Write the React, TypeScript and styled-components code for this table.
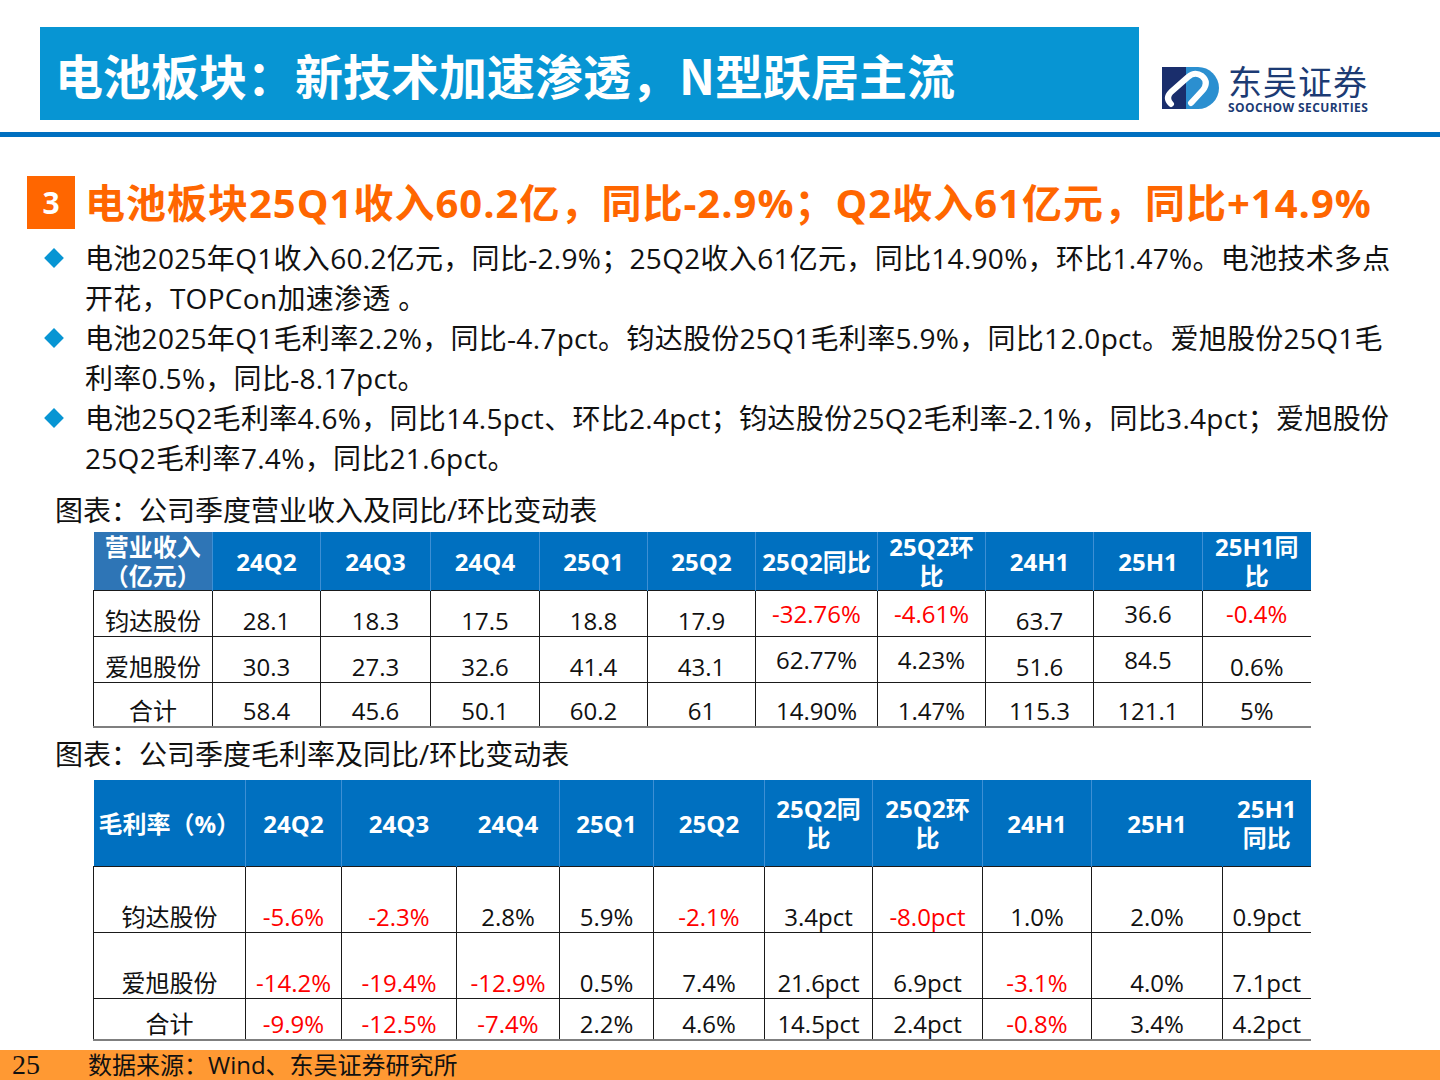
import React from "react";
import styled, { createGlobalStyle } from "styled-components";

const GlobalStyle = createGlobalStyle`
  body {
    margin: 0;
    background: #ffffff;
    font-family: "Open Sans", "Noto Sans CJK SC", sans-serif;
  }
`;

const Page = styled.div`
  width: 1440px;
  height: 1080px;
  overflow: hidden;
  display: flex;
  flex-direction: column;
  background: #ffffff;
  color: #111111;
`;

const TopBar = styled.div`
  display: flex;
  align-items: flex-start;
  height: 120px;
  box-sizing: border-box;
  padding-top: 27px;
`;

const TitleBox = styled.div`
  margin-left: 40px;
  width: 1099px;
  height: 93px;
  box-sizing: border-box;
  padding-left: 15px;
  display: flex;
  align-items: center;
  background: #0795d3;
  color: #ffffff;
  font-family: "Noto Sans CJK SC", sans-serif;
  font-weight: 700;
  font-size: 48px;
  white-space: nowrap;
`;

const Logo = styled.div`
  margin-left: 23px;
  margin-top: 40px;
  display: flex;
  align-items: flex-start;
  gap: 9px;
`;

const LogoText = styled.div`
  display: flex;
  flex-direction: column;
  color: #1c3b74;
`;

const LogoCn = styled.div`
  font-family: "Noto Sans CJK SC", sans-serif;
  font-size: 34px;
  line-height: 34px;
  letter-spacing: 1px;
  margin-top: -3px;
`;

const LogoEn = styled.div`
  font-family: "Open Sans", sans-serif;
  font-weight: 700;
  font-size: 12px;
  line-height: 13px;
  letter-spacing: 0.4px;
  margin-top: 3px;
`;

const Rule = styled.div`
  margin-top: 12px;
  height: 5px;
  background: #0070c0;
`;

const Section = styled.div`
  margin-top: 39px;
  display: flex;
  align-items: center;
`;

const NumBox = styled.div`
  margin-left: 27px;
  width: 48px;
  height: 53px;
  display: flex;
  align-items: center;
  justify-content: center;
  background: #ff6600;
  color: #ffffff;
  font-weight: 700;
  font-size: 30px;
`;

const SectionTitle = styled.div`
  margin-left: 10px;
  color: #ff6600;
  font-weight: 700;
  font-size: 40px;
  letter-spacing: 1px;
  line-height: 53px;
  white-space: nowrap;
`;

const Bullets = styled.div`
  margin-top: 9px;
  display: flex;
  flex-direction: column;
`;

const Bullet = styled.div`
  display: flex;
  align-items: flex-start;
`;

const Diamond = styled.div`
  width: 14px;
  height: 14px;
  margin: 13px 0 0 47px;
  background: #0795d3;
  transform: rotate(45deg);
`;

const BulletText = styled.div`
  margin-left: 24px;
  font-size: 28px;
  letter-spacing: 0.3px;
  line-height: 40px;
  color: #111111;
  white-space: nowrap;
`;

const Caption = styled.div<{ $top: number }>`
  margin-top: ${(p) => p.$top}px;
  padding-left: 55px;
  font-size: 28px;
  line-height: 40px;
  white-space: nowrap;
`;

const Table = styled.table<{ $top: number }>`
  margin-top: ${(p) => p.$top}px;
  margin-left: 93px;
  width: 1217px;
  border-collapse: collapse;
  table-layout: fixed;
`;

const Th = styled.th<{ $h: number; $first?: boolean; $noSep?: boolean; $left?: boolean }>`
  height: ${(p) => p.$h}px;
  padding: 0;
  background: ${(p) => (p.$first ? "#2e75b6" : "#0070c0")};
  color: #ffffff;
  font-weight: 700;
  font-size: 24px;
  line-height: 29px;
  text-align: ${(p) => (p.$left ? "left" : "center")};
  padding-left: ${(p) => (p.$left ? "5px" : "0")};
  border-right: 1px solid ${(p) => (p.$noSep ? "#0070c0" : "#3d8fd4")};
  white-space: nowrap;
  &:last-child {
    border-right: none;
  }
`;

const Td = styled.td<{ $h: number; $mid?: boolean; $red?: boolean; $last?: boolean }>`
  height: ${(p) => p.$h}px;
  padding: 0;
  text-align: center;
  vertical-align: ${(p) => (p.$mid ? "middle" : "bottom")};
  font-size: 24px;
  line-height: 30px;
  color: ${(p) => (p.$red ? "#ff0000" : "#111111")};
  border-top: 1.5px solid #1a1a1a;
  border-left: 1.5px solid #1a1a1a;
  border-bottom: ${(p) => (p.$last ? "2px solid #7f7f7f" : "none")};
  white-space: nowrap;
`;

const Footer = styled.div`
  margin-top: auto;
  height: 30px;
  background: #ff9933;
  display: flex;
  align-items: center;
`;

const PageNo = styled.div`
  margin-left: 12px;
  width: 76px;
  font-family: "Liberation Serif", serif;
  font-size: 28px;
  line-height: 30px;
  color: #111111;
`;

const Source = styled.div`
  font-size: 24px;
  line-height: 30px;
  color: #111111;
`;

type Cell = { v: string; red?: boolean; mid?: boolean };

const c = (v: string, opts: Partial<Cell> = {}): Cell => ({ v, ...opts });

const revHeaders = ["24Q2", "24Q3", "24Q4", "25Q1", "25Q2", "25Q2同比", "25Q2环\n比", "24H1", "25H1", "25H1同\n比"];
const revWidths = [119, 108, 110, 109, 108, 108, 122, 108, 108, 109, 108];
const revRows: { name: string; h: number; cells: Cell[] }[] = [
  {
    name: "钧达股份",
    h: 45,
    cells: [
      c("28.1"), c("18.3"), c("17.5"), c("18.8"), c("17.9"),
      c("-32.76%", { red: true, mid: true }), c("-4.61%", { red: true, mid: true }),
      c("63.7"), c("36.6", { mid: true }), c("-0.4%", { red: true, mid: true }),
    ],
  },
  {
    name: "爱旭股份",
    h: 45,
    cells: [
      c("30.3"), c("27.3"), c("32.6"), c("41.4"), c("43.1"),
      c("62.77%", { mid: true }), c("4.23%", { mid: true }),
      c("51.6"), c("84.5", { mid: true }), c("0.6%"),
    ],
  },
  {
    name: "合计",
    h: 43,
    cells: [
      c("58.4"), c("45.6"), c("50.1"), c("60.2"), c("61"),
      c("14.90%"), c("1.47%"), c("115.3"), c("121.1"), c("5%"),
    ],
  },
];

const gmHeaders = ["24Q2", "24Q3", "24Q4", "25Q1", "25Q2", "25Q2同\n比", "25Q2环\n比", "24H1", "25H1", "25H1\n同比"];
const gmNoSep = [false, true, false, false, false, false, false, false, true, false];
const gmWidths = [152, 96, 115, 103, 94, 111, 108, 110, 109, 131, 88];
const gmRows: { name: string; h: number; cells: Cell[] }[] = [
  {
    name: "钧达股份",
    h: 65,
    cells: [
      c("-5.6%", { red: true }), c("-2.3%", { red: true }), c("2.8%"), c("5.9%"),
      c("-2.1%", { red: true }), c("3.4pct"), c("-8.0pct", { red: true }),
      c("1.0%"), c("2.0%"), c("0.9pct"),
    ],
  },
  {
    name: "爱旭股份",
    h: 65,
    cells: [
      c("-14.2%", { red: true }), c("-19.4%", { red: true }), c("-12.9%", { red: true }),
      c("0.5%"), c("7.4%"), c("21.6pct"), c("6.9pct"),
      c("-3.1%", { red: true }), c("4.0%"), c("7.1pct"),
    ],
  },
  {
    name: "合计",
    h: 40,
    cells: [
      c("-9.9%", { red: true }), c("-12.5%", { red: true }), c("-7.4%", { red: true }),
      c("2.2%"), c("4.6%"), c("14.5pct"), c("2.4pct"),
      c("-0.8%", { red: true }), c("3.4%"), c("4.2pct"),
    ],
  },
];

// several lines inside one text block, split on "\n"
const Lines: React.FC<{ text: string }> = ({ text }) => (
  <>
    {text.split("\n").map((t, i) => (
      <React.Fragment key={i}>
        {i > 0 && <br />}
        {t}
      </React.Fragment>
    ))}
  </>
);

const LogoMark = () => (
  <svg width="57" height="42" viewBox="0 0 57 42">
    <rect x="0" y="0" width="30" height="42" fill="#1a2e6c" />
    <path d="M24 0 H36 A21 21 0 0 1 36 42 H24 Z" fill="#2b8fd0" />
    <path
      d="M9 37 Q3 31 9 25 L26 10 Q33 4 40 9 Q47 15 41 23 L29 36"
      fill="none"
      stroke="#ffffff"
      strokeWidth="6"
      strokeLinecap="round"
      strokeLinejoin="round"
    />
  </svg>
);

const App: React.FC = () => {
  return (
    <Page>
      <GlobalStyle />
      <TopBar>
        <TitleBox>电池板块：新技术加速渗透，N型跃居主流</TitleBox>
        <Logo>
          <LogoMark />
          <LogoText>
            <LogoCn>东吴证券</LogoCn>
            <LogoEn>SOOCHOW SECURITIES</LogoEn>
          </LogoText>
        </Logo>
      </TopBar>
      <Rule />

      <Section>
        <NumBox>3</NumBox>
        <SectionTitle>电池板块25Q1收入60.2亿，同比-2.9%；Q2收入61亿元，同比+14.9%</SectionTitle>
      </Section>

      <Bullets>
        <Bullet>
          <Diamond />
          <BulletText>
            <Lines text={"电池2025年Q1收入60.2亿元，同比-2.9%；25Q2收入61亿元，同比14.90%，环比1.47%。电池技术多点\n开花，TOPCon加速渗透 。"} />
          </BulletText>
        </Bullet>
        <Bullet>
          <Diamond />
          <BulletText>
            <Lines text={"电池2025年Q1毛利率2.2%，同比-4.7pct。钧达股份25Q1毛利率5.9%，同比12.0pct。爱旭股份25Q1毛\n利率0.5%，同比-8.17pct。"} />
          </BulletText>
        </Bullet>
        <Bullet>
          <Diamond />
          <BulletText>
            <Lines text={"电池25Q2毛利率4.6%，同比14.5pct、环比2.4pct；钧达股份25Q2毛利率-2.1%，同比3.4pct；爱旭股份\n25Q2毛利率7.4%，同比21.6pct。"} />
          </BulletText>
        </Bullet>
      </Bullets>

      <Caption $top={12}>图表：公司季度营业收入及同比/环比变动表</Caption>
      <Table $top={2}>
        <colgroup>
          {revWidths.map((w, i) => (
            <col key={i} style={{ width: w }} />
          ))}
        </colgroup>
        <thead>
          <tr>
            <Th $h={58} $first>
              <Lines text={"营业收入\n（亿元）"} />
            </Th>
            {revHeaders.map((h) => (
              <Th key={h} $h={58}>
                <Lines text={h} />
              </Th>
            ))}
          </tr>
        </thead>
        <tbody>
          {revRows.map((r, ri) => (
            <tr key={r.name}>
              <Td $h={r.h} $last={ri === revRows.length - 1}>{r.name}</Td>
              {r.cells.map((cell, ci) => (
                <Td key={ci} $h={r.h} $mid={cell.mid} $red={cell.red} $last={ri === revRows.length - 1}>
                  {cell.v}
                </Td>
              ))}
            </tr>
          ))}
        </tbody>
      </Table>

      <Caption $top={6}>图表：公司季度毛利率及同比/环比变动表</Caption>
      <Table $top={6}>
        <colgroup>
          {gmWidths.map((w, i) => (
            <col key={i} style={{ width: w }} />
          ))}
        </colgroup>
        <thead>
          <tr>
            <Th $h={86} $left>
              毛利率（%）
            </Th>
            {gmHeaders.map((h, i) => (
              <Th key={h} $h={86} $noSep={gmNoSep[i]}>
                <Lines text={h} />
              </Th>
            ))}
          </tr>
        </thead>
        <tbody>
          {gmRows.map((r, ri) => (
            <tr key={r.name}>
              <Td $h={r.h} $last={ri === gmRows.length - 1}>{r.name}</Td>
              {r.cells.map((cell, ci) => (
                <Td key={ci} $h={r.h} $mid={cell.mid} $red={cell.red} $last={ri === gmRows.length - 1}>
                  {cell.v}
                </Td>
              ))}
            </tr>
          ))}
        </tbody>
      </Table>

      <Footer>
        <PageNo>25</PageNo>
        <Source>数据来源：Wind、东吴证券研究所</Source>
      </Footer>
    </Page>
  );
};

export default App;
